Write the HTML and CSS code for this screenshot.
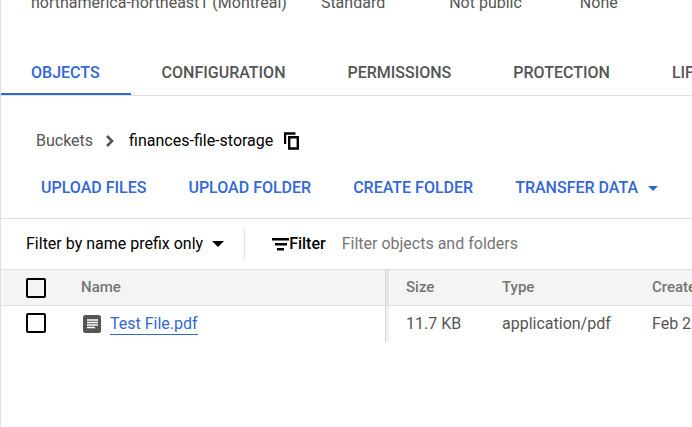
FILE: index.html
```html
<!DOCTYPE html>
<html lang="en">
<head>
<meta charset="utf-8">
<title>finances-file-storage</title>
<link rel="stylesheet" href="styles.css">
</head>
<body>
<main class="page">
  <div class="summary">
    <span>northamerica-northeast1 (Montréal)</span>
    <span>Standard</span>
    <span class="summary-access">Not public</span>
    <span class="summary-protection">None</span>
  </div>
  <nav class="tabs">
    <a class="tab tab-active" href="#objects">OBJECTS</a>
    <a class="tab" href="#configuration">CONFIGURATION</a>
    <a class="tab" href="#permissions">PERMISSIONS</a>
    <a class="tab" href="#protection">PROTECTION</a>
    <a class="tab" href="#lifecycle">LIFECYCLE</a>
  </nav>
  <nav class="breadcrumb" aria-label="Breadcrumb">
    <a class="crumb" href="#buckets">Buckets</a>
    <svg class="chevron" width="10" height="14" viewBox="0 0 10 14" aria-hidden="true"><path d="M2 2l5 5-5 5" fill="none" stroke="#555" stroke-width="2.6"/></svg>
    <span class="current">finances-file-storage</span>
    <button class="copy" type="button" aria-label="Copy name"><svg width="16" height="18" viewBox="0 0 16 18"><path d="M1 12V1.500h10.500M5.200 5.200h8.600v11.300h-8.600z" fill="none" stroke="#000" stroke-width="2.400"/></svg></button>
  </nav>
  <div class="toolbar">
    <button class="action" type="button">UPLOAD FILES</button>
    <button class="action" type="button">UPLOAD FOLDER</button>
    <button class="action" type="button">CREATE FOLDER</button>
    <button class="action" type="button">TRANSFER DATA <svg width="10" height="5" viewBox="0 0 10 5" aria-hidden="true"><path d="M0 0h10L5 5z" fill="#3367d6"/></svg></button>
  </div>
  <div class="filterbar">
    <button class="prefix" type="button">Filter by name prefix only <svg width="12" height="6" viewBox="0 0 12 6" aria-hidden="true"><path d="M0 0h12L6 6z"/></svg></button>
    <label class="filter-label" for="filter"><svg width="17" height="13" viewBox="0 0 17 13" aria-hidden="true"><path d="M0 0h17v2.500H0zM3 5h12v2.500H3zM5 10h7v2.500H5z"/></svg>Filter</label>
    <input class="filter-input" id="filter" type="text" placeholder="Filter objects and folders">
  </div>
  <div class="table-wrap">
    <table class="objects">
      <colgroup><col class="col-check"><col class="col-name"><col class="col-size"><col class="col-type"><col class="col-created"></colgroup>
      <thead>
        <tr>
          <th class="check-cell"><input class="check" type="checkbox" aria-label="Select all"></th>
          <th class="name-cell">Name</th>
          <th class="size-cell">Size</th>
          <th>Type</th>
          <th>Created</th>
        </tr>
      </thead>
      <tbody>
        <tr>
          <td class="check-cell"><input class="check" type="checkbox" aria-label="Select Test File.pdf"></td>
          <td class="name-cell"><div class="file"><svg width="18" height="18" viewBox="0 0 18 18" aria-hidden="true"><rect width="18" height="18" rx="2.500" fill="#555"/><path d="M4 5h11M4 7.500h11M4 10h11M4 12.500h8" stroke="#fff" stroke-width="1.300"/></svg><a class="file-link" href="#file">Test File.pdf</a></div></td>
          <td class="size-cell">11.7 KB</td>
          <td>application/pdf</td>
          <td>Feb 2</td>
        </tr>
      </tbody>
    </table>
  </div>
</main>
</body>
</html>
```
FILE: styles.css
```css
* {
  box-sizing: border-box;
}

body {
  margin: 0;
  background: #fff;
  color: #555;
  font: 16px/20px Roboto, sans-serif;
}

button,
input {
  font: inherit;
}

button {
  padding: 0;
  border: 0;
  background: none;
  cursor: pointer;
}

a {
  color: inherit;
  text-decoration: none;
}

.page {
  min-height: 100vh;
  border-left: 1px solid #e0e0e0;
  overflow: hidden;
}

.summary {
  display: flex;
  align-items: flex-end;
  gap: 34px;
  height: 13px;
  padding-left: 30px;
  overflow: hidden;
  white-space: nowrap;
}

.summary-access {
  margin-left: 30px;
}

.summary-protection {
  margin-left: 24px;
}

.tabs {
  display: flex;
  gap: 1px;
  margin-top: 37px;
  border-bottom: 1px solid #e0e0e0;
  font-weight: 500;
}

.tab {
  flex: none;
  padding: 13px 31px 10px 30px;
  border-bottom: 2px solid transparent;
}

.tab-active {
  border-color: #3367d6;
  color: #3367d6;
}

.breadcrumb {
  display: flex;
  align-items: center;
  padding: 35px 35px 0;
}

.chevron {
  margin: 0 14px 0 12px;
}

.current {
  color: #000;
}

.copy {
  display: flex;
  margin-left: 11px;
}

.toolbar {
  display: flex;
  gap: 42px;
  padding: 27px 40px 20px;
  border-bottom: 1px solid #e0e0e0;
}

.action {
  display: flex;
  flex: none;
  align-items: center;
  gap: 10px;
  color: #3367d6;
  font-weight: 500;
}

.filterbar {
  display: flex;
  align-items: center;
  height: 50px;
  padding-left: 25px;
}

.prefix {
  display: flex;
  flex: none;
  align-items: center;
  gap: 9px;
  height: 30px;
  padding-right: 20px;
  border-right: 1px solid #e0e0e0;
  color: #000;
}

.filter-label {
  display: flex;
  align-items: center;
  margin-left: 27px;
  color: #000;
  font-weight: 500;
}

.filter-input {
  flex: 1;
  min-width: 0;
  margin-left: 16px;
  padding: 0;
  border: 0;
  outline: 0;
}

.filter-input::placeholder {
  color: #757575;
}

.table-wrap {
  overflow: hidden;
}

.objects {
  width: 100%;
  min-width: 760px;
  border-collapse: separate;
  border-spacing: 0;
  table-layout: fixed;
}

.col-check {
  width: 60px;
}

.col-name {
  width: 325px;
}

.col-size {
  width: 96px;
}

.col-type {
  width: 150px;
}

th,
td {
  height: 36px;
  padding: 0 0 0 20px;
  text-align: left;
  white-space: nowrap;
}

th {
  height: 37px;
  padding-bottom: 2px;
  border-top: 1px solid #e0e0e0;
  border-bottom: 1px solid #e0e0e0;
  background: #f4f4f4;
  color: #757575;
  font-size: 15px;
  font-weight: 500;
}

.check-cell {
  padding-left: 25px;
}

th.check-cell {
  padding-bottom: 0;
}

td.check-cell {
  padding-bottom: 2px;
}

.name-cell {
  border-right: 1px solid #d4d4d4;
}

.size-cell {
  box-shadow: inset 3px 0 rgba(0, 0, 0, 0.06);
}

.check {
  display: block;
  width: 20px;
  height: 20px;
  margin: 0;
  border: 2px solid #000;
  border-radius: 2px;
  appearance: none;
  background: #fff;
}

th .check {
  background: transparent;
}

.file {
  display: flex;
  align-items: center;
  gap: 9px;
  padding-left: 2px;
}

.file-link {
  border-bottom: 1px solid #3367d6;
  color: #3367d6;
}
```
